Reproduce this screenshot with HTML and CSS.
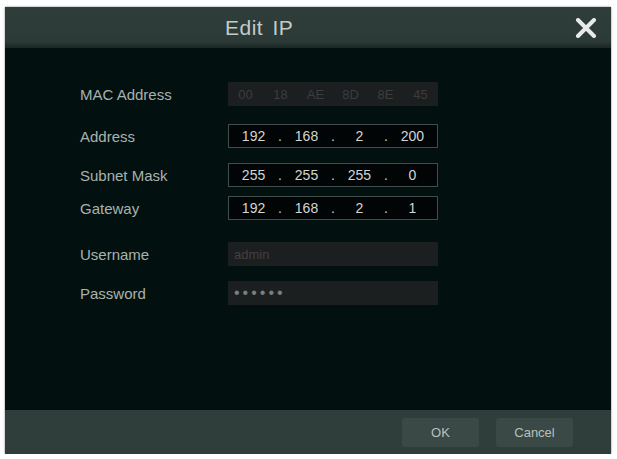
FILE: index.html
```html
<!DOCTYPE html>
<html lang="en">
  <head>
    <meta charset="UTF-8" />
    <meta name="viewport" content="width=device-width, initial-scale=1.0" />
    <title>Edit IP</title>
    <link rel="stylesheet" href="styles.css">
  </head>
  <body>
    <div class="dialog">
      <div class="header">
        <span class="title">Edit IP</span>
        <span class="close">
          <svg width="22" height="20" viewBox="0 0 22 20">
            <path d="M3 2 L19 18 M19 2 L3 18" stroke="#e6eae8" stroke-width="4" stroke-linecap="round" />
          </svg>
        </span>
      </div>

      <div class="content">
        <div class="field">
          <label>MAC Address</label>
          <div class="box disabled mac">
            <span>00</span><span>18</span><span>AE</span><span>8D</span><span>8E</span><span>45</span>
          </div>
        </div>
        <div class="field gap-md">
          <label>Address</label>
          <div class="box ip">
            <span>192</span><i>.</i><span>168</span><i>.</i><span>2</span><i>.</i><span>200</span>
          </div>
        </div>
        <div class="field gap-sm">
          <label>Subnet Mask</label>
          <div class="box ip">
            <span>255</span><i>.</i><span>255</span><i>.</i><span>255</span><i>.</i><span>0</span>
          </div>
        </div>
        <div class="field gap-xs">
          <label>Gateway</label>
          <div class="box ip">
            <span>192</span><i>.</i><span>168</span><i>.</i><span>2</span><i>.</i><span>1</span>
          </div>
        </div>
        <div class="field gap-lg">
          <label>Username</label>
          <div class="box disabled text">admin</div>
        </div>
        <div class="field gap-sm">
          <label>Password</label>
          <div class="box disabled text pass">&#8226;&#8226;&#8226;&#8226;&#8226;&#8226;</div>
        </div>
      </div>

      <div class="footer">
        <button class="btn">OK</button>
        <button class="btn">Cancel</button>
      </div>
    </div>
  </body>
</html>
```

FILE: styles.css
```css
body {
  margin: 0;
  background: #ffffff;
  font-family: "Liberation Sans", Arial, sans-serif;
}
.dialog {
  margin: 7px 6px 0 5px;
  width: 606px;
  height: 447px;
  display: flex;
  flex-direction: column;
  background: #021110;
  box-shadow: 0 0 2px rgba(0, 0, 0, 0.5);
}
.header {
  height: 41px;
  display: flex;
  align-items: center;
  background: linear-gradient(to bottom, #2f3e3b 0%, #2c3a37 85%, #1a2624 100%);
}
.title {
  margin-left: 220px;
  font-size: 21px;
  color: #c3cbc7;
  letter-spacing: 0.5px;
  word-spacing: 3px;
}
.close {
  margin-left: auto;
  margin-right: 14px;
  display: flex;
}
.content {
  flex: 1;
  padding: 34px 0 0 75px;
}
.field {
  display: flex;
  align-items: center;
  height: 24px;
}
.field label {
  width: 148px;
  font-size: 15px;
  color: #a9b2ae;
}
.gap-xs { margin-top: 9px; }
.gap-sm { margin-top: 15px; }
.gap-md { margin-top: 18px; }
.gap-lg { margin-top: 22px; }
.box {
  width: 210px;
  height: 24px;
  box-sizing: border-box;
  display: flex;
  align-items: center;
}
.box.disabled {
  background: #1c1f20;
}
.box.mac span {
  flex: 1;
  text-align: center;
  font-size: 13px;
  color: #3d3c3f;
}
.box.ip {
  background: #020505;
  border: 1px solid #414d4a;
}
.box.ip span {
  flex: 1;
  text-align: center;
  font-size: 14px;
  color: #d2d6d3;
}
.box.ip i {
  font-style: normal;
  font-size: 14px;
  color: #c8ccc9;
}
.box.text {
  padding-left: 6px;
  font-size: 13px;
  color: #433f45;
}
.box.pass {
  font-size: 16px;
  letter-spacing: 3px;
  color: #7a7e7e;
}
.footer {
  height: 44px;
  display: flex;
  align-items: center;
  justify-content: flex-end;
  gap: 17px;
  padding-right: 38px;
  background: #2f3e3b;
}
.btn {
  width: 77px;
  height: 29px;
  border: none;
  border-radius: 3px;
  background: #3a4846;
  color: #b8c0bc;
  font-family: "Liberation Sans", Arial, sans-serif;
  font-size: 13px;
}
```
